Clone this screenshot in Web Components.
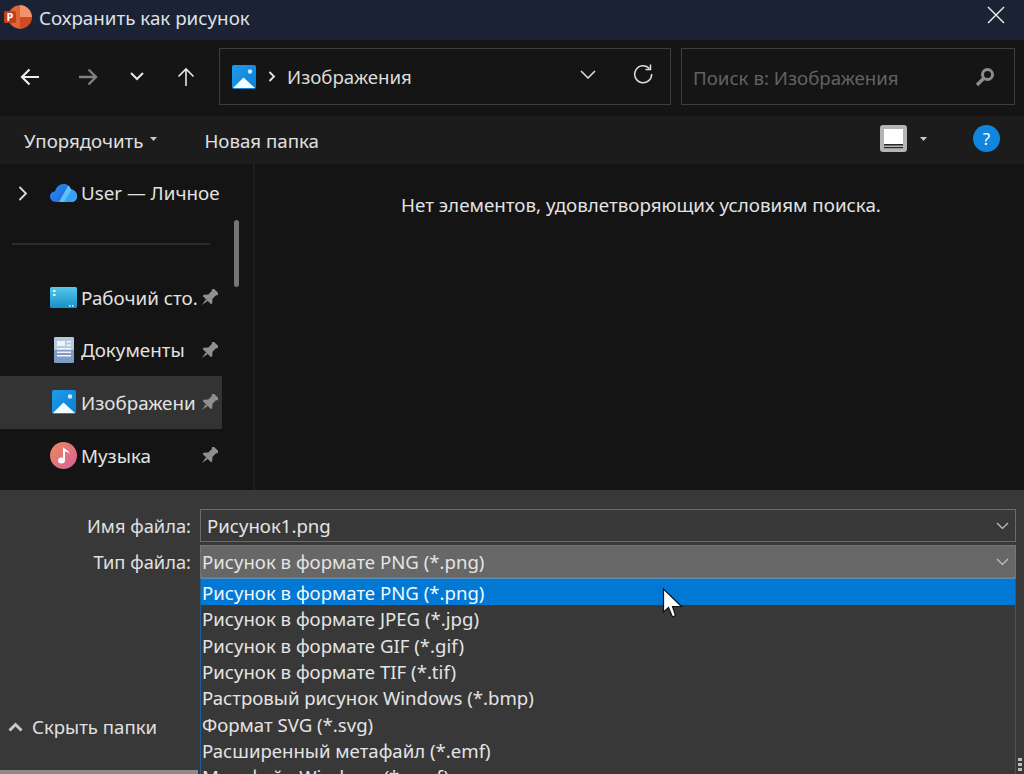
<!DOCTYPE html>
<html lang="ru">
<head>
<meta charset="utf-8">
<title>Сохранить как рисунок</title>
<style>
  html, body { margin: 0; height: 100%; background: #383838; overflow: hidden; }
  body { font-family: "Noto Sans", "Liberation Sans", sans-serif; font-size: 18.7px; color: #e6e6e6; }
</style>
</head>
<body>
<save-dialog></save-dialog>

<script>
const CLOUD = 'M6 18 C2 18 0 15 0 12.5 C0 9.5 2.5 7.5 5 7.5 C6 3 9.5 0 13.5 0 C17 0 20 2 21 5.5 C24.5 6 27 9 27 12 C27 15.5 24.5 18 21.5 18 Z';

const ICONS = {
  pictures: `<svg width="24" height="24" viewBox="0 0 24 24"><defs><linearGradient id="p" x1="0" y1="0" x2="1" y2="1"><stop offset="0" stop-color="#1f9be8"/><stop offset="1" stop-color="#0a7fd6"/></linearGradient></defs><rect x="0" y="0" width="24" height="24" rx="2" fill="url(#p)"/><circle cx="18" cy="6.5" r="2.2" fill="#cfeaff"/><path d="M1 23 L11.5 12.5 L23 23 Z" fill="#f4fafe"/></svg>`,
  onedrive: `<svg width="27" height="18" viewBox="0 0 27 18"><defs><linearGradient id="c" x1="0" y1="0" x2="1" y2="0.6"><stop offset="0" stop-color="#2f8cf0"/><stop offset="1" stop-color="#1c63d8"/></linearGradient><clipPath id="cc"><path d="${CLOUD}"/></clipPath></defs><path d="${CLOUD}" fill="url(#c)"/><g clip-path="url(#cc)"><path d="M19 0 H27 V18 H9 Z" fill="#5cc2f8"/><path d="M22 5 H27 V18 H14 Z" fill="#38a0f2"/></g></svg>`,
  desktop: `<svg width="27" height="21" viewBox="0 0 27 21"><defs><linearGradient id="d" x1="0" y1="0" x2="0" y2="1"><stop offset="0" stop-color="#55c7ea"/><stop offset="1" stop-color="#1590c8"/></linearGradient></defs><rect width="27" height="21" rx="1.5" fill="url(#d)"/><rect x="3" y="3" width="2.5" height="2" fill="#e4f7fd"/><rect x="3" y="7" width="2.5" height="2" fill="#e4f7fd"/><rect x="19" y="18" width="1.5" height="1.5" fill="#e4f7fd"/><rect x="22" y="18" width="1.5" height="1.5" fill="#e4f7fd"/></svg>`,
  docs: `<svg width="20" height="26" viewBox="0 0 20 26"><rect width="20" height="26" rx="1.5" fill="#7f9cc4"/><rect y="0" width="20" height="13" rx="1.5" fill="#b9c7dc"/><rect x="3" y="4" width="8" height="5" fill="#f0f4f9"/><rect x="12.5" y="4" width="4.5" height="1.5" fill="#f0f4f9"/><rect x="12.5" y="7.5" width="4.5" height="1.5" fill="#f0f4f9"/><rect x="3" y="11" width="14" height="1.5" fill="#f0f4f9"/><rect x="3" y="14.5" width="14" height="1.5" fill="#f0f4f9"/><rect x="3" y="18" width="14" height="1.5" fill="#f0f4f9"/></svg>`,
  music: `<svg width="27" height="27" viewBox="0 0 27 27"><defs><linearGradient id="m" x1="0" y1="0" x2="1" y2="1"><stop offset="0" stop-color="#ea8a5c"/><stop offset="1" stop-color="#d8609a"/></linearGradient></defs><circle cx="13.5" cy="13.5" r="13.5" fill="url(#m)"/><path d="M13 5 C15 8 19.5 8 19.5 12 C18 10 16.5 9.8 15 9.8 L15 18 L13 18 Z" fill="#fff"/><ellipse cx="11.5" cy="18.5" rx="3.5" ry="3" fill="#fff"/></svg>`,
  pin: `<svg width="18" height="18" viewBox="0 0 18 18"><g transform="rotate(45 9 9)" fill="#8f8f8f"><path d="M5 -1 H13 V1 L12 2 V7 L15 10.5 V12 H3 V10.5 L6 7 V2 L5 1 Z"/><path d="M7.8 12 H10.2 L9 19 Z"/></g></svg>`,
};

function define(name, css, html) {
  customElements.define(name, class extends HTMLElement {
    connectedCallback() {
      if (this.shadowRoot) return;
      this.attachShadow({ mode: 'open' });
      this.shadowRoot.innerHTML = `<style>${css}</style>` +
        (typeof html === 'function' ? html(this) : html);
    }
  });
}

define('title-bar', `
  :host { display: flex; align-items: center; height: 40px; background: #1b2233; padding: 0 0 0 4px; flex: none; }
  svg { flex: none; }
  .t { margin-left: 7px; font-size: 18.8px; color: #dfe1e6; flex: 1; margin-top: -5px; }
  .x { margin: -10px 19px 0 0; }
`, `
  <svg width="28" height="24" viewBox="0 0 28 24" style="margin-top:-7px">
    <circle cx="16" cy="12" r="11.8" fill="#e0653b"/>
    <path d="M16 0.2 A11.8 11.8 0 0 1 27.8 12 L16 12 Z" fill="#f0926e"/>
    <path d="M16 12 L27.8 12 A11.8 11.8 0 0 1 16 23.8 Z" fill="#d04a22"/>
    <rect x="0" y="6" width="12" height="12" rx="1.5" fill="#c43e1c"/>
    <text x="2.6" y="16" font-size="11" font-weight="700" fill="#fff" font-family="Noto Sans">P</text>
  </svg>
  <span class="t"><slot></slot></span>
  <svg class="x" width="18" height="18" viewBox="0 0 18 18"><path d="M1 1 L17 17 M17 1 L1 17" stroke="#f0f0f0" stroke-width="1.4"/></svg>
`);

define('nav-bar', `
  :host { display: flex; align-items: flex-start; height: 76px; background: #151515; flex: none; padding: 8px 9px 0 0; box-sizing: border-box; }
  .btns { display: flex; width: 219px; height: 57px; flex: none; align-items: center; }
  .b { display: flex; justify-content: center; flex: none; }
  .box { height: 57px; box-sizing: border-box; border: 1px solid #3d3d3d; display: flex; align-items: center; }
  .addr { width: 452px; flex: none; padding: 0 17px 0 12px; margin-right: 10px; }
  .crumb { color: #dcdcdc; margin: 0 0 0 11px; flex: 1; }
  .sep { margin-left: 12px; }
  .drop { margin: 0 37px 5px 0; }
  .refresh { margin-bottom: 5px; }
  .search { flex: 1; padding: 1px 19px 0 11px; justify-content: space-between; color: #626262; }
`, `
  <div class="btns">
    <div class="b" style="width:59px"><svg width="20" height="18" viewBox="0 0 20 18"><path d="M19 9 H2 M9.5 1.5 L2 9 L9.5 16.5" fill="none" stroke="#ececec" stroke-width="2.2"/></svg></div>
    <div class="b" style="width:58px"><svg width="20" height="18" viewBox="0 0 20 18"><path d="M1 9 H18 M10.5 1.5 L18 9 L10.5 16.5" fill="none" stroke="#808080" stroke-width="2.4"/></svg></div>
    <div class="b" style="width:40px"><svg width="14" height="9" viewBox="0 0 14 9"><path d="M1 1 L7 7 L13 1" fill="none" stroke="#e6e6e6" stroke-width="2"/></svg></div>
    <div class="b" style="width:58px"><svg width="18" height="20" viewBox="0 0 18 20"><path d="M9 19 V2 M1.5 9.5 L9 2 L16.5 9.5" fill="none" stroke="#e6e6e6" stroke-width="1.6"/></svg></div>
  </div>
  <div class="box addr">
    ${ICONS.pictures}
    <svg class="sep" width="8" height="11" viewBox="0 0 8 11"><path d="M1.5 1 L6 5.5 L1.5 10" fill="none" stroke="#e6e6e6" stroke-width="1.8"/></svg>
    <span class="crumb">Изображения</span>
    <svg class="drop" width="16" height="9" viewBox="0 0 16 9"><path d="M1 1 L8 8 L15 1" fill="none" stroke="#e0e0e0" stroke-width="1.5"/></svg>
    <svg class="refresh" width="20" height="20" viewBox="0 0 20 20"><path d="M16.5 4.5 A8.5 8.5 0 1 0 18.7 10" fill="none" stroke="#e0e0e0" stroke-width="1.5"/><path d="M17.5 0.5 V5.5 H12.5" fill="none" stroke="#e0e0e0" stroke-width="1.5"/></svg>
  </div>
  <div class="box search">
    <span>Поиск в: Изображения</span>
    <svg width="20" height="20" viewBox="0 0 20 20"><circle cx="12.5" cy="7.5" r="5" fill="none" stroke="#8d8d8d" stroke-width="3"/><path d="M8.5 11.5 L2 18" stroke="#8d8d8d" stroke-width="3.4"/></svg>
  </div>
`);

define('tool-bar', `
  :host { display: flex; align-items: center; height: 48px; background: #1c1c1c; flex: none; padding: 0 24px 0 24px; color: #e0e0e0; }
  .caret { margin: 0 0 3px 7px; }
  .new { margin-left: 47px; flex: 1; }
  .help { margin: -4px 0 0 46px; }
  .view { margin: -4px 0 0 0; }
`, `
  <span>Упорядочить</span>
  <svg class="caret" width="7" height="4" viewBox="0 0 7 4"><path d="M0 0 H7 L3.5 4 Z" fill="#c8c8c8"/></svg>
  <span class="new">Новая папка</span>
  <svg class="view" width="27" height="27" viewBox="0 0 27 27"><rect width="27" height="27" rx="3" fill="#b4b4b4"/><rect x="4" y="4" width="19" height="15" fill="#fff"/><rect x="4" y="19" width="19" height="1.5" fill="#2a2a2a"/><rect x="4" y="22" width="19" height="1.2" fill="#2a2a2a"/></svg>
  <svg class="caret" style="margin-left:13px" width="7" height="4" viewBox="0 0 7 4"><path d="M0 0 H7 L3.5 4 Z" fill="#c8c8c8"/></svg>
  <svg class="help" width="27" height="27" viewBox="0 0 27 27"><circle cx="13.5" cy="13.5" r="13.5" fill="#0f86dc"/><text x="13.5" y="19.5" text-anchor="middle" font-size="17" font-family="Noto Sans" fill="#fff">?</text></svg>
`);

define('side-item', `
  :host { display: flex; align-items: center; height: 52.6px; width: 222px; box-sizing: border-box; flex: none; color: #e2e2e2; font-size: 18.8px; }
  :host([selected]) { background: #333; }
  .ic { width: 81px; flex: none; display: flex; justify-content: center; box-sizing: border-box; padding-left: 46px; }
  .lb { white-space: nowrap; overflow: hidden; width: 116px; padding-top: 1px; }
  .pin { margin: 2px 0 0 3px; display: flex; }
`, (el) => `
  <div class="ic">${ICONS[el.getAttribute('icon')]}</div>
  <div class="lb"><slot></slot></div>
  <div class="pin">${ICONS.pin}</div>
`);

define('side-bar', `
  :host { display: block; width: 255px; flex: none; box-sizing: border-box; border-right: 2px solid #1f1f1f; position: relative; overflow: hidden; }
  .top { display: flex; align-items: center; height: 58px; color: #e2e2e2; font-size: 18.8px; }
  .chev { margin: 0 22px 0 18px; flex: none; }
  .rule { height: 2px; background: #2c2c2c; margin: 21px 0 26px 12px; width: 198px; }
  .thumb { position: absolute; left: 234px; top: 56px; width: 5px; height: 67px; border-radius: 3px; background: #757575; }
  .od { width: 31px; flex: none; display: flex; }
`, `
  <div class="top">
    <svg class="chev" width="10" height="15" viewBox="0 0 10 15"><path d="M1.5 1 L8 7.5 L1.5 14" fill="none" stroke="#dcdcdc" stroke-width="1.8"/></svg>
    <div class="od">${ICONS.onedrive}</div>
    <span>User — Личное</span>
  </div>
  <div class="rule"></div>
  <slot></slot>
  <div class="thumb"></div>
`);

define('file-list', `
  :host { display: block; flex: 1; text-align: center; padding: 28px 0 0 3px; color: #e2e2e2; font-size: 18.8px; }
`, `<slot></slot>`);

define('field-row', `
  :host { display: grid; grid-template-columns: 191px 1fr; column-gap: 9px; align-items: center; color: #e0e0e0; }
  .lb { text-align: right; font-size: 18.3px; }
`, (el) => `
  <div class="lb">${el.getAttribute('label')}</div>
  <div><slot></slot></div>
`);

const CHEVRON = `<svg width="13" height="8" viewBox="0 0 13 8"><path d="M1 1 L6.5 6.5 L12 1" fill="none" stroke="#c4c4c4" stroke-width="1.2"/></svg>`;

define('combo-box', `
  :host { display: flex; align-items: center; justify-content: space-between; box-sizing: border-box; height: 33px; border: 1px solid #6a6a6a; padding: 0 6px; color: #e4e4e4; font-size: 18.6px; }
  :host([open]) { background: #676767; border-color: #757575; padding-left: 1px; }
`, `<span><slot></slot></span>${CHEVRON}`);

define('type-list', `
  :host { display: block; height: 196px; overflow: hidden; box-sizing: border-box; border-left: 1px solid #1f5f94; border-right: 1px solid #1f5f94; border-top: 1px solid #5a8db5; }
`, `<slot></slot>`);

define('type-option', `
  :host { display: flex; align-items: center; height: 26.3px; box-sizing: border-box; padding: 1px 0 0 1px; color: #e4e4e4; font-size: 18.6px; white-space: nowrap; flex: none; }
  :host([selected]) { background: #0078d4; color: #f2f8fd; }
`, `<slot></slot>`);

define('mouse-cursor', `
  :host { display: block; position: absolute; left: 662px; top: 588px; width: 22px; height: 32px; }
`, `<svg width="22" height="32" viewBox="0 0 22 32"><path d="M1.5 1 V24 L6.5 19.5 L10.5 29 L13.5 27.5 L10.5 18.5 L19.5 18.5 Z" fill="#fff" stroke="#111" stroke-width="1.2"/></svg>`);

define('bottom-panel', `
  :host { display: block; flex: 1; background: #383838; position: relative; padding: 19px 8px 0 0; box-sizing: border-box; overflow: hidden; }
  .rows { display: flex; flex-direction: column; gap: 3px; }
  .hide { position: absolute; left: 8px; top: 224px; display: flex; align-items: center; gap: 9px; color: #e0e0e0; font-size: 18.6px; }
  .edge { position: absolute; left: 0; bottom: 0; width: 198px; height: 4px; background: #8b8b8b; }
  .grip { position: absolute; right: 2px; bottom: 2px; width: 4px; height: 14px; background: repeating-linear-gradient(#bdbdbd 0 3px, transparent 3px 5px); }
`, `
  <div class="rows"><slot></slot></div>
  <div class="hide">
    <svg width="15" height="10" viewBox="0 0 15 10"><path d="M1.5 8.5 L7.5 2.5 L13.5 8.5" fill="none" stroke="#c8c8c8" stroke-width="3"/></svg>
    <span>Скрыть папки</span>
  </div>
  <div class="edge"></div>
  <div class="grip"></div>
`);

define('save-dialog', `
  :host { display: flex; flex-direction: column; height: 774px; width: 1024px; position: relative; overflow: hidden; }
  .main { display: flex; height: 326px; flex: none; background: #141414; }
`, `
  <title-bar>Сохранить как рисунок</title-bar>
  <nav-bar></nav-bar>
  <tool-bar></tool-bar>
  <div class="main">
    <side-bar>
      <side-item icon="desktop">Рабочий сто...</side-item>
      <side-item icon="docs">Документы</side-item>
      <side-item icon="pictures" selected>Изображени</side-item>
      <side-item icon="music">Музыка</side-item>
    </side-bar>
    <file-list>Нет элементов, удовлетворяющих условиям поиска.</file-list>
  </div>
  <bottom-panel>
    <field-row label="Имя файла:"><combo-box>Рисунок1.png</combo-box></field-row>
    <field-row label="Тип файла:">
      <combo-box open>Рисунок в формате PNG (*.png)</combo-box>
    </field-row>
    <field-row label="" style="margin-top:-3px">
      <type-list>
        <type-option selected>Рисунок в формате PNG (*.png)</type-option>
        <type-option>Рисунок в формате JPEG (*.jpg)</type-option>
        <type-option>Рисунок в формате GIF (*.gif)</type-option>
        <type-option>Рисунок в формате TIF (*.tif)</type-option>
        <type-option>Растровый рисунок Windows (*.bmp)</type-option>
        <type-option>Формат SVG (*.svg)</type-option>
        <type-option>Расширенный метафайл (*.emf)</type-option>
        <type-option>Метафайл Windows (*.wmf)</type-option>
      </type-list>
    </field-row>
  </bottom-panel>
  <mouse-cursor></mouse-cursor>
`);
</script>
</body>
</html>
